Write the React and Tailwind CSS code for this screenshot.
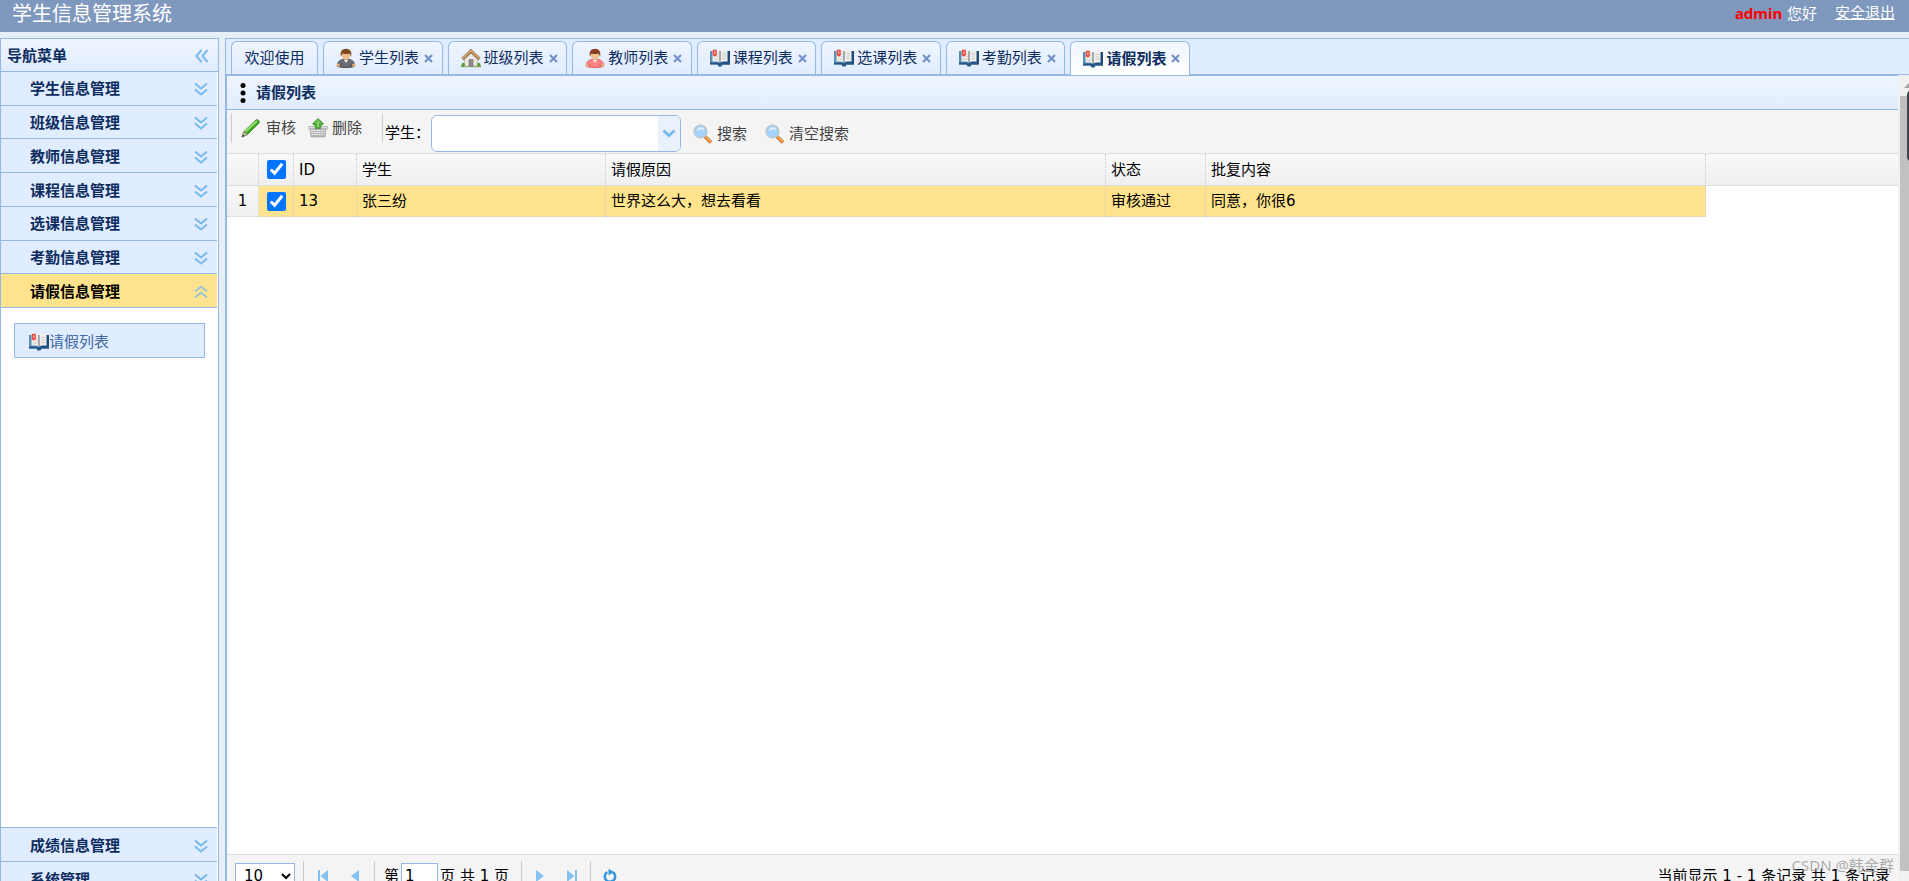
import { useState } from 'react'

const menus = ['学生信息管理', '班级信息管理', '教师信息管理', '课程信息管理', '选课信息管理', '考勤信息管理', '请假信息管理']
const bottomMenus = ['成绩信息管理', '系统管理']

const tabs = [
  { title: '学生列表', Icon: StudentIcon },
  { title: '班级列表', Icon: HouseIcon },
  { title: '教师列表', Icon: TeacherIcon },
  { title: '课程列表', Icon: BookIcon },
  { title: '选课列表', Icon: BookIcon },
  { title: '考勤列表', Icon: BookIcon },
  { title: '请假列表', Icon: BookIcon },
]

const rows = [
  { id: 13, student: '张三纷', info: '世界这么大，想去看看', status: '审核通过', remark: '同意，你很6' },
]

function Person({ coat, shade, hair }) {
  return (
    <svg width="20" height="20" viewBox="0 0 20 20" className="shrink-0">
      <path d="M1.500 18.500c-.5-4.500 2-6.500 5.500-7h6c3.500.5 6 2.500 5.500 7-5 1.500-12 1.500-17 0z" fill={coat} stroke={shade} strokeWidth=".9" />
      <path d="M5 15.500v3.500M15 15.500v3.500" stroke={shade} />
      <path d="M7.500 11.500h5L10 15z" fill="#f3e4d6" />
      <circle cx="10" cy="7.200" r="4.300" fill="#f0bf90" />
      <path d="M4.900 8.500C3.800 3.500 6 .7 10 .7s6.200 2.800 5.100 7.800c-.8-1.300-1-2.300-1.600-3-2 .7-5 .7-7 0-.6.7-.8 1.700-1.600 3z" fill={hair} />
      <circle cx="2.300" cy="17.300" r="1.700" fill="#e0a878" />
      <circle cx="17.700" cy="17.300" r="1.700" fill="#e0a878" />
    </svg>
  )
}

function StudentIcon() {
  return <Person coat="#6b6e74" shade="#44474d" hair="#7d4a20" />
}

function TeacherIcon() {
  return <Person coat="#fb8588" shade="#e0595e" hair="#8a3d22" />
}

function HouseIcon() {
  return (
    <svg width="20" height="20" viewBox="0 0 20 20" className="shrink-0">
      <path d="M0 17.300h20v1.900H0z" fill="#6faa4a" />
      <path d="M3.500 9.500 10 4l6.500 5.500v8.700h-13z" fill="#ebe7df" stroke="#b0a594" strokeWidth=".6" />
      <path d="M8 11.500h4v6.700H8z" fill="#8f8a86" stroke="#666" strokeWidth=".5" />
      <path d="m1.500 11 8.500-8 8.500 8" fill="none" stroke="#7f6442" strokeWidth="3.200" />
      <path d="m1.500 10.500 8.500-8 8.500 8" fill="none" stroke="#cfa671" strokeWidth="1.900" />
      <circle cx="2.300" cy="16.500" r="1.700" fill="#5b9c3e" />
      <circle cx="17.700" cy="16.500" r="1.700" fill="#5b9c3e" />
    </svg>
  )
}

function BookIcon() {
  return (
    <svg width="20" height="18" viewBox="0 0 20 18" className="shrink-0">
      <path d="M0 2h10v13.500H0z" fill="#5d8eb4" />
      <path d="M10 2h10v13.500H10z" fill="#1f4c7c" />
      <path d="M0 13.500h20v2h-7.500L11.500 17.500h-3l-1-2H0z" fill="#24588a" />
      <path d="M2.500 1.500c2.500-.8 5.500-.6 7.500.7 2-1.300 5-1.500 7.500-.7v11.200c-2.800-.6-5.700-.3-7.500.9-1.800-1.200-4.700-1.500-7.500-.9z" fill="#efefec" />
      <path d="M9 2v11.200h2V2z" fill="#a7aaac" />
      <path d="M12.500 4.500H16M12.500 7H16M12.500 9.500H16M7 5h1.500M7 7.500h1.500M4 10h4.500" stroke="#c5c8c8" />
      <path d="M2.800.8h4v5.400L4.800 7.800l-2-1.600z" fill="#e8483c" />
      <path d="M4.800 2.200v3" stroke="#ffb9ae" strokeWidth="1.200" />
    </svg>
  )
}

function PencilIcon() {
  return (
    <svg width="20" height="20" viewBox="0 0 20 20" className="shrink-0">
      <path d="M1 19 3 13.500 15 2c1.500-1.200 4.300 1 3 3L6.500 16.500z" fill="#3fa626" stroke="#2c7a1d" strokeWidth=".8" />
      <path d="M4.500 13.500 16 3" stroke="#98e070" strokeWidth="2" />
      <path d="M1 19 3 13.500l3.500 3z" fill="#cfc09a" stroke="#6b7a52" strokeWidth=".6" />
      <path d="m1 19 .8-2.400 1.500 1.500z" fill="#333" />
    </svg>
  )
}

function BasketIcon() {
  return (
    <svg width="20" height="20" viewBox="0 0 20 20" className="shrink-0">
      <path d="M2 10.500h16L17 19H3z" fill="#b9b9b9" stroke="#999" strokeWidth=".6" />
      <path d="M3 12.500h14M3.300 14.500h13.400M3.600 16.500h12.800" stroke="#f4f4f4" strokeDasharray="1.500 1" />
      <path d="M.5 8.500h19v2.300H.5z" fill="#dedede" stroke="#9c9c9c" strokeWidth=".6" />
      <path d="m10 .5 5.500 5.200-1.200 1.300h-1.500v3.500H7.200V7H5.700L4.500 5.700z" fill="#4ea935" stroke="#3a8a2a" strokeWidth=".6" />
      <path d="m10 2 3 3.200h-2V9H9V5.200H7z" fill="#86cf68" />
    </svg>
  )
}

function SearchIcon() {
  return (
    <svg width="20" height="20" viewBox="0 0 20 20" className="shrink-0">
      <path d="m12 12.500 6 6" stroke="#b9682a" strokeWidth="3.600" />
      <path d="m12.500 12.500 5.500 5.500" stroke="#f2aa4d" strokeWidth="2" />
      <circle cx="7.500" cy="7.500" r="6.300" fill="#a3d2fb" stroke="#bcc6d0" strokeWidth="1.600" />
      <path d="M3.500 7c.5-2.500 2-3.800 4.500-3.800S11.500 5 11.500 6c-3-1-5-.5-8 1z" fill="#dff1ff" />
    </svg>
  )
}

function Chevrons({ className = '' }) {
  return (
    <svg width="14" height="14" viewBox="0 0 14 14" className={className}>
      <path d="m1 1.500 6 5 6-5M1 7.500l6 5 6-5" fill="none" stroke="#78b9f0" strokeWidth="2" />
    </svg>
  )
}

function MenuItem({ title, active, className }) {
  return (
    <button
      className={`flex w-full items-center justify-between border-b border-[#95b8e7] pt-[2px] pr-[9px] pl-[29px] text-[15px] leading-5 font-bold ${active ? 'bg-[#ffe48d] text-black' : 'bg-[#e0ecff] text-[#0e2d5f]'} ${className}`}
    >
      {title}
      <Chevrons className={active ? 'rotate-180 opacity-70' : ''} />
    </button>
  )
}

function PageButton({ label, children }) {
  return (
    <button aria-label={label} className="flex size-8 items-center justify-center">
      <svg width="14" height="14" viewBox="0 0 14 14">{children}</svg>
    </button>
  )
}

function Divider() {
  return <div className="h-[30px] w-px shrink-0 bg-[#ccc]" />
}

export default function App() {
  const [checked, setChecked] = useState(true)
  const toggle = () => setChecked(!checked)
  const cell = 'border-r border-b border-dotted border-[#ccc] px-[5px] font-normal'
  const box = 'block size-[19px] accent-[#0075ff]'

  return (
    <div className="h-screen overflow-hidden bg-[#e6eef8] font-['DejaVu_Sans','Noto_Sans_CJK_SC',sans-serif] text-[15px] leading-5 text-black">
      <div className="flex h-[calc(100vh+16px)] flex-col">
        <header className="flex h-8 shrink-0 items-start justify-between bg-[#7f99be] pr-[14px] pl-3 text-white">
          <h1 className="text-[20px] leading-7">学生信息管理系统</h1>
          <div className="flex gap-[18px] pt-[3px]">
            <span>
              <b className="font-['Noto_Sans'] text-[#f00]">admin</b> 您好
            </span>
            <a href="#logout" className="underline">安全退出</a>
          </div>
        </header>

        <div className="flex min-h-0 flex-1 pt-[6px]">
          <aside className="mr-[6px] flex w-[219px] shrink-0 flex-col border border-[#95b8e7] bg-white">
            <div className="flex h-[33px] shrink-0 items-center justify-between border-b border-[#95b8e7] bg-linear-to-b from-[#eff5ff] to-[#e0ecff] pt-px pr-[9px] pl-[6px] font-bold text-[#0e2d5f]">
              导航菜单
              <button aria-label="收起">
                <Chevrons className="rotate-90" />
              </button>
            </div>
            <nav className="flex min-h-0 flex-1 flex-col pr-px">
              <div className="flex h-[236px] shrink-0 flex-col">
                {menus.map(m => (
                  <MenuItem key={m} title={m} active={m === '请假信息管理'} className="flex-1" />
                ))}
              </div>
              <div className="min-h-0 flex-1 py-[15px] pr-3 pl-[13px]">
                <a href="#leave" className="flex h-[35px] items-center border border-[#95b8e7] bg-[#e0ecff] pt-[3px] pl-[14px] text-[#416aa3]">
                  <BookIcon />
                  请假列表
                </a>
              </div>
              <div className="border-t border-[#95b8e7]">
                {bottomMenus.map(m => (
                  <MenuItem key={m} title={m} className="h-[34px]" />
                ))}
              </div>
            </nav>
          </aside>

          <main className="flex min-w-0 flex-1 flex-col border-t border-l border-[#95b8e7] bg-white">
            <div className="flex h-9 shrink-0 items-end gap-[5px] border-b border-[#95b8e7] bg-[#e0ecff] pl-[5px] text-[#0e2d5f]">
              <button className="h-[33px] w-[87px] rounded-t-[6px] border border-b-0 border-[#95b8e7] bg-linear-to-b from-[#eff5ff] to-[#e0ecff]">
                欢迎使用
              </button>
              <div className="grid w-[867px] grid-cols-7 gap-[5px]">
                {tabs.map(({ title, Icon }, i) => {
                  const active = i === tabs.length - 1
                  return (
                    <div
                      key={title}
                      className={`flex items-center rounded-t-[6px] border border-b-0 border-[#95b8e7] bg-linear-to-b from-[#eff5ff] pl-3 ${active ? '-mb-px h-[34px] to-white font-bold' : 'h-[33px] to-[#e0ecff]'}`}
                    >
                      <button className="flex items-center gap-[3px] whitespace-nowrap">
                        <Icon />
                        {title}
                      </button>
                      <button aria-label="关闭" className="ml-[5px]">
                        <svg width="9" height="9" viewBox="0 0 9 9">
                          <path d="m1 1 7 7M8 1 1 8" stroke="#6d8fc6" strokeWidth="2" />
                        </svg>
                      </button>
                    </div>
                  )
                })}
              </div>
            </div>

            <div className="flex min-h-0 flex-1">
              <section className="flex min-w-0 flex-1 flex-col border-t border-l border-[#95b8e7]">
                <div className="flex h-[34px] shrink-0 items-center gap-[10px] border-b border-[#95b8e7] bg-linear-to-b from-[#eff5ff] to-[#e0ecff] pl-[13px] font-bold text-[#0e2d5f]">
                  <svg width="6" height="20" viewBox="0 0 6 20">
                    <circle cx="3" cy="2.500" r="2.500" />
                    <circle cx="3" cy="10" r="2.500" />
                    <circle cx="3" cy="17.500" r="2.500" />
                  </svg>
                  请假列表
                </div>

                <div className="flex h-11 shrink-0 items-start border-b border-[#ddd] bg-[#f4f4f4] pt-[3px] pl-1 text-[#444]">
                  <Divider />
                  <button className="ml-[9px] flex h-[30px] items-center gap-[5px]"><PencilIcon />审核</button>
                  <button className="mr-5 ml-3 flex h-[30px] items-center gap-1"><BasketIcon />删除</button>
                  <Divider />
                  <label htmlFor="student" className="pt-[10px] pl-[2px] text-black">学生：</label>
                  <div className="relative mt-[2px] ml-[1px] h-[37px] w-[250px] overflow-hidden rounded-[6px] border border-[#95b8e7] bg-white">
                    <select id="student" className="h-full w-full appearance-none pl-2 outline-none">
                      <option></option>
                    </select>
                    <span className="pointer-events-none absolute inset-y-0 right-0 flex w-[22px] items-center justify-center bg-[#e9f1fd]">
                      <svg width="14" height="9" viewBox="0 0 14 9">
                        <path d="m1.500 1.500 5.500 5 5.500-5" fill="none" stroke="#78b9f0" strokeWidth="3" />
                      </svg>
                    </span>
                  </div>
                  <button className="mt-1 ml-3 flex h-[34px] items-center gap-1"><SearchIcon />搜索</button>
                  <button className="mt-1 ml-[18px] flex h-[34px] items-center gap-1"><SearchIcon />清空搜索</button>
                </div>

                <div className="min-h-0 flex-1 overflow-hidden">
                  <table className="w-full table-fixed border-separate border-spacing-0 text-left">
                    <colgroup>
                      <col className="w-8" />
                      <col className="w-[35px]" />
                      <col className="w-[63px]" />
                      <col className="w-[249px]" />
                      <col className="w-[500px]" />
                      <col className="w-[100px]" />
                      <col className="w-[500px]" />
                      <col />
                    </colgroup>
                    <thead>
                      <tr className="h-8 bg-linear-to-b from-[#f9f9f9] to-[#efefef] [&>th]:border-b-[#ddd] [&>th]:[border-bottom-style:solid]">
                        <th className={cell}></th>
                        <th className={`${cell} pl-2`}>
                          <input type="checkbox" aria-label="全选" checked={checked} onChange={toggle} className={box} />
                        </th>
                        <th className={cell}>ID</th>
                        <th className={cell}>学生</th>
                        <th className={cell}>请假原因</th>
                        <th className={cell}>状态</th>
                        <th className={cell}>批复内容</th>
                        <th className="border-b"></th>
                      </tr>
                    </thead>
                    <tbody>
                      {rows.map((r, i) => (
                        <tr key={r.id} className="h-[31px] [&>td:nth-child(n+2):nth-child(-n+7)]:bg-[#ffe48d]">
                          <td className={`${cell} bg-linear-to-b from-[#f9f9f9] to-[#efefef] text-center`}>{i + 1}</td>
                          <td className={`${cell} pl-2`}>
                            <input type="checkbox" aria-label="选择" checked={checked} onChange={toggle} className={box} />
                          </td>
                          <td className={cell}>{r.id}</td>
                          <td className={cell}>{r.student}</td>
                          <td className={cell}>{r.info}</td>
                          <td className={cell}>{r.status}</td>
                          <td className={cell}>{r.remark}</td>
                          <td></td>
                        </tr>
                      ))}
                    </tbody>
                  </table>
                </div>

                <div className="relative flex h-[43px] shrink-0 items-center border-t border-[#ddd] bg-[#f4f4f4] pr-2 pl-2">
                  <select aria-label="每页条数" className="mr-2 h-[26px] w-[60px] border border-[#95b8e7] bg-white pl-1">
                    <option>10</option>
                  </select>
                  <Divider />
                  <div className="mx-[3px] flex">
                    <PageButton label="首页"><path d="M2 1h2v12H2zM12 1v12L4.500 7z" fill="#84c1f0" /></PageButton>
                    <PageButton label="上一页"><path d="M11 1v12L3 7z" fill="#84c1f0" /></PageButton>
                  </div>
                  <Divider />
                  <label className="ml-[9px] flex items-center">
                    第
                    <input defaultValue="1" className="mx-[2px] h-[26px] w-[37px] border border-[#95b8e7] bg-white px-[3px]" />
                    页
                  </label>
                  <span className="mr-3 ml-[5px]">共 1 页</span>
                  <Divider />
                  <div className="mx-[2px] flex">
                    <PageButton label="下一页"><path d="M3 1v12l8-6z" fill="#84c1f0" /></PageButton>
                    <PageButton label="末页"><path d="M10 1h2v12h-2zM2 1v12l7.500-6z" fill="#84c1f0" /></PageButton>
                  </div>
                  <Divider />
                  <div className="ml-[3px] flex">
                    <PageButton label="刷新">
                      <path d="M9.500 3a5.200 5.200 0 1 1-5.200.1" fill="none" stroke="#2f96dc" strokeWidth="2.400" />
                      <path d="M5.500-.5v7L10.500 3z" fill="#2f96dc" />
                    </PageButton>
                  </div>
                  <span className="ml-auto">当前显示 1 - 1 条记录 共 1 条记录</span>
                  <span className="absolute top-0 right-1 font-['Noto_Sans','Noto_Sans_CJK_SC',sans-serif] text-[#999]/80">CSDN @韩金群</span>
                </div>
              </section>

              <div className="relative flex w-[11px] shrink-0 flex-col overflow-hidden bg-[#f1f1f1] pb-[26px] pl-[2px]">
                <svg width="9" height="21" viewBox="0 0 9 21" className="shrink-0">
                  <path d="M4 13 9 8v5z" fill="#a3a3a3" />
                </svg>
                <div className="flex-1 bg-[#c1c1c1]" />
                <div className="absolute top-4 -right-2 h-[70px] w-[10px] rounded-[4px] bg-[#3b4250]" />
              </div>
            </div>
          </main>
        </div>
      </div>
    </div>
  )
}
